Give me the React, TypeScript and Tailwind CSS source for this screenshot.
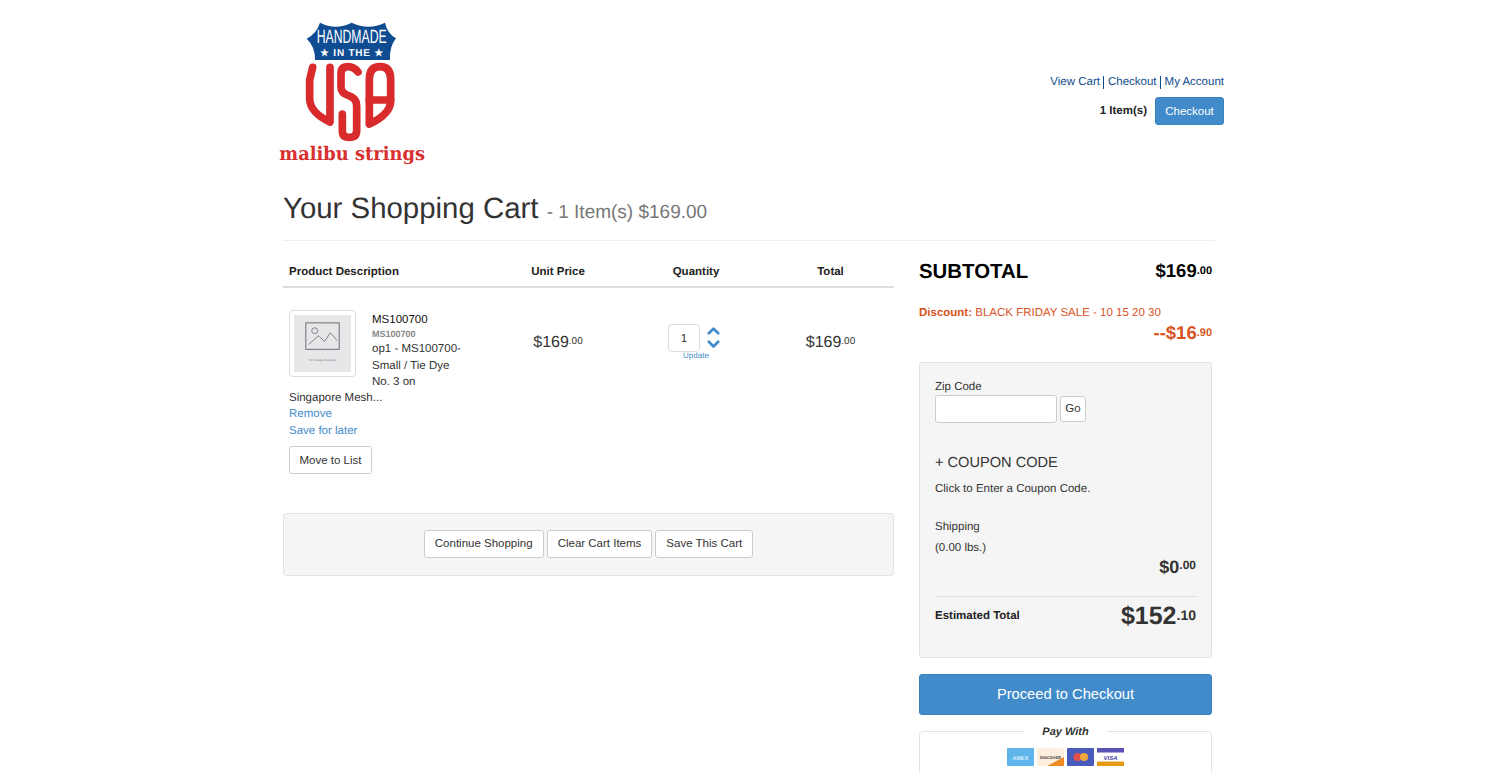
import React from "react";

function Logo() {
  return (
    <svg width="170" height="170" viewBox="0 0 510 510" className="block">
      <path
        d="M110 86 Q140 70 150 38 Q197 62 245 38 Q295 62 345 38 Q352 70 378 85 Q358 110 360 150 H135 Q136 110 110 86 Z"
        fill="#0f4c92"
      />
      <text x="245" y="100" textAnchor="middle" fill="#ffffff" fontSize="58" fontFamily="'Liberation Sans', sans-serif" textLength="210" lengthAdjust="spacingAndGlyphs">
        HANDMADE
      </text>
      <text x="245" y="137" textAnchor="middle" fill="#ffffff" fontSize="30" fontWeight="700" fontFamily="'Liberation Sans', sans-serif" textLength="190" lengthAdjust="spacing">
        ★ IN THE ★
      </text>
      <g fill="none" stroke="#d92a2c" strokeWidth="23" strokeLinecap="round" strokeLinejoin="round">
        <path d="M128 172 L119 210 V268 Q121 308 180 336 V172" />
        <path d="M264 186 Q252 170 234 170 Q213 170 213 192 V232 Q213 250 236 257 Q260 265 260 287 V362 Q260 382 237 382 Q217 382 217 362 V312" />
        <path d="M298 342 V208 Q298 170 330 170 Q362 170 362 208 V272 Q362 312 298 342" />
        <path d="M298 270 H362" />
      </g>
      <text x="28" y="450" fill="#d8302f" fontSize="56" fontWeight="700" fontFamily="'DejaVu Serif', serif" textLength="437" lengthAdjust="spacingAndGlyphs">
        malibu strings
      </text>
    </svg>
  );
}

function Price({ main, cents, className, centsClass }: { main: string; cents: string; className: string; centsClass: string }) {
  return (
    <span className={className}>
      {main}
      <span className={`${centsClass} relative top-[-0.3em] leading-none`}>{cents}</span>
    </span>
  );
}

function NoImage() {
  return (
    <div className="float-left mr-[16px] mb-[4px] w-[67px] h-[67px] border border-[#ddd] rounded-[4px] p-[4px] bg-white">
      <svg viewBox="0 0 58 58" className="block w-full h-full">
        <rect width="58" height="58" fill="#e6e7e9" />
        <rect x="12" y="8" width="34" height="27" fill="none" stroke="#7f8184" strokeWidth="1.2" />
        <circle cx="21" cy="16" r="3" fill="none" stroke="#7f8184" strokeWidth="1" />
        <path d="M15 30 L25 21 L31 27 L37 18 L44 26" fill="none" stroke="#7f8184" strokeWidth="1" />
        <text x="29" y="47" textAnchor="middle" fontSize="3.2" fill="#8a8a8a" fontFamily="'Liberation Sans', sans-serif">No Image Available</text>
      </svg>
    </div>
  );
}

const btn = "h-[28px] pt-[1px] px-[10px] whitespace-nowrap bg-white border border-[#ccc] rounded-[3px] text-[11.5px] text-[#333] leading-none";

function Cards() {
  return (
    <div className="flex justify-center gap-[3px]">
      <svg width="27" height="18" viewBox="0 0 27 18">
        <rect width="27" height="18" rx="1" fill="#5fb5ea" />
        <text x="13.5" y="11.5" textAnchor="middle" fontSize="5.5" fontWeight="700" fill="#d8eefb" fontFamily="'Liberation Sans', sans-serif">AMEX</text>
      </svg>
      <svg width="27" height="18" viewBox="0 0 27 18">
        <rect width="27" height="18" rx="1" fill="#fdeedd" />
        <path d="M10 18 L27 9 V18 Z" fill="#ee8a22" />
        <text x="13.5" y="10.5" textAnchor="middle" fontSize="4" fontWeight="700" fill="#333" fontFamily="'Liberation Sans', sans-serif">DISCOVER</text>
      </svg>
      <svg width="27" height="18" viewBox="0 0 27 18">
        <rect width="27" height="18" rx="1" fill="#4a5cbb" />
        <circle cx="10.5" cy="9" r="4" fill="#e2504c" />
        <circle cx="17" cy="9" r="4" fill="#f0a83f" />
      </svg>
      <svg width="27" height="18" viewBox="0 0 27 18">
        <rect width="27" height="18" fill="#ffffff" />
        <rect width="27" height="4.5" fill="#5a51b5" />
        <rect y="13.5" width="27" height="4.5" fill="#e59a14" />
        <text x="13.5" y="11.5" textAnchor="middle" fontSize="6" fontWeight="700" fontStyle="italic" fill="#4a48a8" fontFamily="'Liberation Sans', sans-serif">VISA</text>
      </svg>
    </div>
  );
}

export default function App() {
  return (
    <div className="h-[773px] overflow-hidden bg-white text-[#333] font-['Liberation_Sans',Arial,sans-serif] text-[11.5px] [text-rendering:geometricPrecision]">
      <div className="ml-[283px] w-[941px]">
        <header className="flex justify-between h-[190px]">
          <div className="-ml-[13px] pt-[10px]">
            <Logo />
          </div>
          <div className="pt-[74px] flex flex-col items-end">
            <div className="flex items-center leading-[16px] text-[#0f4c8a]">
              <a>View Cart</a>
              <span className="mx-[3.5px] h-[13px] w-px bg-[#0f4c8a]" />
              <a>Checkout</a>
              <span className="mx-[3.5px] h-[13px] w-px bg-[#0f4c8a]" />
              <a>My Account</a>
            </div>
            <div className="mt-[7px] flex items-center gap-[8px]">
              <span className="font-bold text-[#222] pt-[2px]">1 Item(s)</span>
              <button className="h-[28px] w-[69px] pt-[1px] rounded-[3px] bg-[#428bca] border border-[#3a80bd] text-white text-[11.5px]">Checkout</button>
            </div>
          </div>
        </header>

        <div className="w-[932px] h-[51px] pt-[1px] border-b border-[#eee]">
          <h1 className="text-[29.4px] leading-[36px] text-[#333]">
            Your Shopping Cart <small className="text-[19px] text-[#777]">- 1 Item(s) $169.00</small>
          </h1>
        </div>

        <div className="flex gap-[25px] pt-[15px]">
          <main className="w-[611px]">
            <div className="grid grid-cols-[207px_136px_140px_128px] h-[32px] pt-[3px] border-b-2 border-[#ddd] font-bold text-[#222] items-center">
              <div className="pl-[6px]">Product Description</div>
              <div className="text-center">Unit Price</div>
              <div className="text-center">Quantity</div>
              <div className="text-center pl-[1px]">Total</div>
            </div>

            <div className="grid grid-cols-[207px_136px_140px_128px] pt-[22px] h-[225px]">
              <div className="pl-[6px] leading-[16.3px] text-[#333]">
                <NoImage />
                <div className="text-[#111] pt-[2px]">MS100700</div>
                <div className="text-[9px] font-bold leading-[12px] pb-[1px] text-[#888]">MS100700</div>
                op1 - MS100700-<br />Small / Tie Dye<br />No. 3 on<br />Singapore Mesh...
                <div className="clear-both text-[#428bca]">Remove</div>
                <div className="text-[#428bca]">Save for later</div>
                <button className={`${btn} mt-[7px] w-[83px] !px-0`}>Move to List</button>
              </div>
              <div className="text-center pt-[21px]">
                <Price main="$169" cents=".00" className="text-[16px] text-[#333]" centsClass="text-[10px]" />
              </div>
              <div className="pt-[14px] flex justify-center">
                <div className="flex flex-col items-center">
                  <div className="flex items-center gap-[6px] -ml-[3px]">
                    <input readOnly value="1" className="w-[32px] h-[28px] border border-[#ddd] rounded-[4px] text-center text-[11.5px] outline-none" />
                    <svg width="15" height="26" viewBox="0 0 16 26" fill="none" stroke="#428bca" strokeWidth="3" strokeLinecap="round" strokeLinejoin="round">
                      <path d="M3 8 L8 3 L13 8" />
                      <path d="M3 17 L8 22 L13 17" />
                    </svg>
                  </div>
                  <a className="-mt-[1px] text-[8px] leading-[9px] text-[#428bca]">Update</a>
                </div>
              </div>
              <div className="text-center pt-[21px] pl-[1px]">
                <Price main="$169" cents=".00" className="text-[16px] text-[#333]" centsClass="text-[10px]" />
              </div>
            </div>

            <div className="h-[63px] pb-[2px] bg-[#f5f5f5] border border-[#e3e3e3] rounded-[3px] flex items-center justify-center gap-[3px]">
              <button className={btn}>Continue Shopping</button>
              <button className={btn}>Clear Cart Items</button>
              <button className={btn}>Save This Cart</button>
            </div>
          </main>

          <aside className="w-[293px]">
            <div className="flex justify-between items-start h-[31px] pt-[1px] text-black font-bold">
              <span className="text-[20.4px] leading-[30px]">SUBTOTAL</span>
              <Price main="$169" cents=".00" className="text-[18.5px] leading-[28px]" centsClass="text-[11px]" />
            </div>
            <div className="mt-[18px] leading-[16px] text-[#d9531e]">
              <b>Discount:</b> BLACK FRIDAY SALE - 10 15 20 30
            </div>
            <div className="text-right text-[#d9531e] font-bold leading-[24px] h-[24px]">
              <Price main="--$16" cents=".90" className="text-[18.5px]" centsClass="text-[11px]" />
            </div>
            <section className="mt-[17px] h-[296px] bg-[#f5f5f5] border border-[#e3e3e3] rounded-[3px] px-[15px] pt-[16px]">
              <label className="block leading-[16px]">Zip Code</label>
              <div className="flex items-center gap-[3px]">
                <input className="w-[122px] h-[28px] bg-white border border-[#ccc] rounded-[3px] outline-none" />
                <button className="w-[26px] h-[26px] bg-white border border-[#ccc] rounded-[3px] text-[11.5px]">Go</button>
              </div>
              <div className="mt-[30px] text-[14.6px] leading-[20px] text-[#333]">+ COUPON CODE</div>
              <div className="mt-[8px] leading-[17px]">Click to Enter a Coupon Code.</div>
              <div className="mt-[21px] leading-[17px]">Shipping</div>
              <div className="mt-[4px] leading-[17px]">(0.00 lbs.)</div>
              <div className="-mt-[1px] text-right font-bold leading-[22px]">
                <Price main="$0" cents=".00" className="text-[18px]" centsClass="text-[12px]" />
              </div>
              <div className="mt-[15px] pt-[4px] border-t border-[#ddd] flex justify-between items-center h-[37px]">
                <b className="text-[#222]">Estimated Total</b>
                <Price main="$152" cents=".10" className="text-[25px] font-bold text-[#333]" centsClass="text-[14px]" />
              </div>
            </section>
            <button className="mt-[16px] w-full h-[41px] bg-[#428bca] border border-[#3a80bd] rounded-[3px] text-white text-[14.7px]">Proceed to Checkout</button>
            <fieldset className="mt-[8px] border border-[#e3e3e3] rounded-[4px] pb-[40px] pt-[9px]">
              <legend className="mx-auto px-[18px] pt-[2px] text-[11px] leading-[14px] font-bold italic text-[#333]">Pay With</legend>
              <Cards />
            </fieldset>
          </aside>
        </div>
      </div>
    </div>
  );
}
